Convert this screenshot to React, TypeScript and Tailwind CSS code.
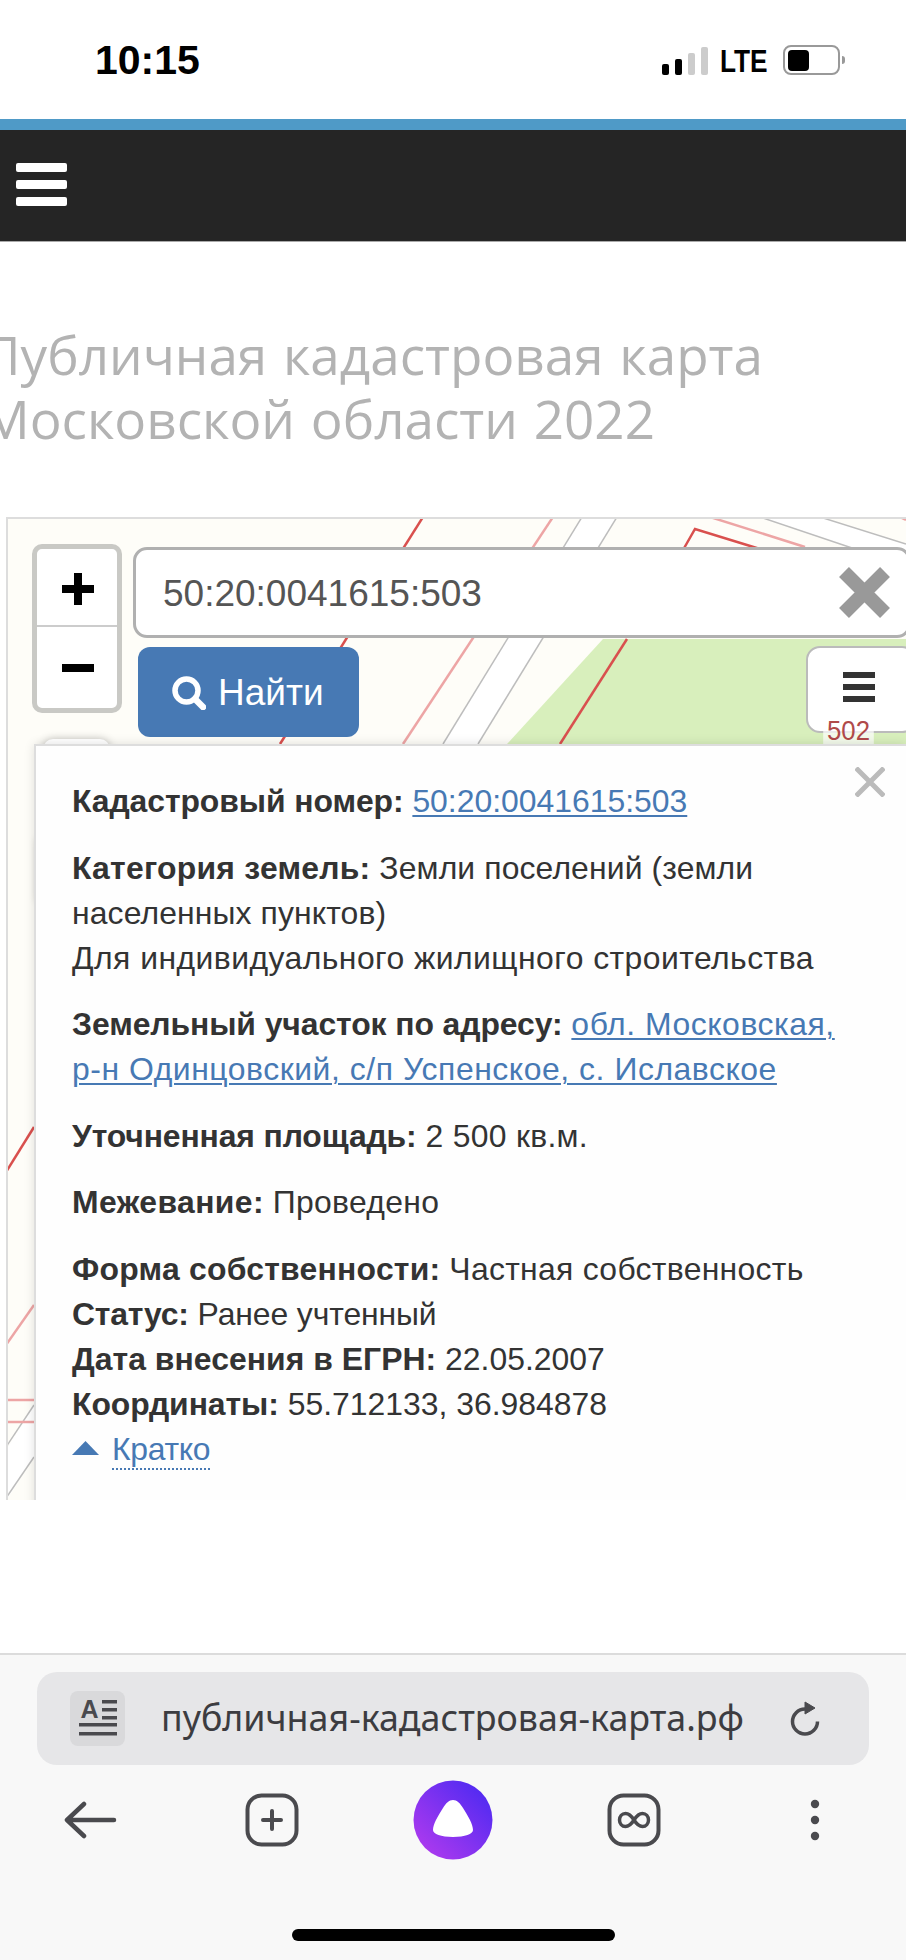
const sans = "font-['Liberation_Sans',Arial,sans-serif]";

function Bold({ children, className = "tracking-[-0.08px]" }: { children: React.ReactNode; className?: string }) {
  return <b className={`font-bold ${className}`}>{children}</b>;
}

function Plain({ children, className = "tracking-[0.3px]" }: { children: React.ReactNode; className?: string }) {
  return <span className={className}>{children}</span>;
}

function Lnk({ children, ru }: { children: React.ReactNode; ru?: boolean }) {
  return (
    <a className={`text-[#4779b4] underline decoration-2 underline-offset-[3px] ${ru ? "tracking-[0.55px]" : ""}`}>
      {children}
    </a>
  );
}

function StatusBar() {
  return (
    <div className={`relative flex h-[119px] shrink-0 items-start bg-white ${sans}`}>
      <div className="ml-[95px] mt-[37px] text-[41px] font-bold leading-[46px] text-black">10:15</div>
      <div className="ml-auto mr-[61px] mt-[45px] flex items-start">
        <div className="mt-px flex h-[29px] items-end gap-[6px]">
          <i className="h-[11px] w-[7px] rounded-[2px] bg-black" />
          <i className="h-[16px] w-[7px] rounded-[2px] bg-black" />
          <i className="h-[22px] w-[7px] rounded-[2px] bg-[#cccccc]" />
          <i className="h-[28px] w-[7px] rounded-[2px] bg-[#cccccc]" />
        </div>
        <div className="ml-[12px] mt-[-2px] w-[48px] origin-left scale-x-[0.82] text-[32px] font-bold leading-[36px] text-black">LTE</div>
        <div className="ml-[15px] flex h-[30px] w-[57px] items-center rounded-[8px] border-2 border-[#999999] pl-[3px]">
          <div className="h-[21px] w-[21px] rounded-[4px] bg-black" />
        </div>
        <div className="ml-[2px] mt-[11px] h-[8px] w-[3px] rounded-r-full bg-[#999999]" />
      </div>
    </div>
  );
}

function NavBar() {
  return (
    <>
      <div className="h-[11px] shrink-0 bg-[#4f9ac7]" />
      <div className="flex h-[112px] shrink-0 flex-col justify-center gap-[8px] border-b border-[#aaaaaa] bg-[#252525] pb-[3px] pl-[16px]">
        <i className="h-[9px] w-[51px] rounded-[2px] bg-white" />
        <i className="h-[9px] w-[51px] rounded-[2px] bg-white" />
        <i className="h-[9px] w-[51px] rounded-[2px] bg-white" />
      </div>
    </>
  );
}

function MapLines() {
  return (
    <svg className="absolute left-0 top-0 h-[981px] w-[898px]" viewBox="8 519 898 981" fill="none">
      <polygon points="603,639 906,639 906,744 507,744" fill="#d8efbc" />
      <polygon points="582,517 617,517 478,744 443,744" fill="#ffffff" />
      <polygon points="760,517 820,517 906,544 906,550 858,550" fill="#ffffff" />
      <polygon points="8,1447 34,1405 34,1457 8,1498" fill="#ffffff" />
      <g stroke="#bdbdbd" strokeWidth="1.5">
        <path d="M582 517 L443 744" />
        <path d="M617 517 L478 744" />
        <path d="M760 517 L858 550" />
        <path d="M820 517 L906 544" />
        <path d="M6 1447 L34 1405" />
        <path d="M6 1498 L34 1457" />
      </g>
      <g stroke="#d9504e" strokeWidth="2.5">
        <path d="M423 517 L280 744" />
        <path d="M627 639 L560 744" />
        <path d="M683 550 L695 529 L760 549" />
        <path d="M6 1172 L34 1127" />
      </g>
      <g stroke="#eda5a5" strokeWidth="2.5">
        <path d="M553 517 L403 744" />
        <path d="M710 517 L805 547" />
        <path d="M6 1345 L34 1305" />
        <path d="M6 1400 L34 1400" />
        <path d="M6 1422 L34 1422" />
        <path d="M900 517 L906 520" />
      </g>
    </svg>
  );
}

function ZoomBox() {
  return (
    <div className="absolute left-[24px] top-[25px] flex h-[169px] w-[90px] flex-col overflow-hidden rounded-[10px] border-[5px] border-[#c9c9c5] bg-white">
      <div className="flex h-[78px] items-center justify-center border-b-2 border-[#cccccc] pl-[2px] pt-[4px]">
        <svg width="32" height="32" viewBox="0 0 32 32" fill="#000000">
          <rect x="0" y="12" width="32" height="8" />
          <rect x="12" y="0" width="8" height="32" />
        </svg>
      </div>
      <div className="flex flex-1 items-center justify-center pl-[2px]">
        <div className="h-[8px] w-[32px] bg-black" />
      </div>
    </div>
  );
}

function SearchControls() {
  return (
    <>
      <div className={`absolute left-[125px] top-[28px] flex h-[91px] w-[778px] items-center rounded-[14px] border-[3px] border-[#b0b0b0] bg-white pl-[27px] pt-[2px] text-[37px] text-[#555555] ${sans}`}>
        50:20:0041615:503
      </div>
      <svg className="absolute left-[831px] top-[48px]" width="51" height="51" viewBox="0 0 51 51" stroke="#999999" strokeWidth="14">
        <path d="M5 5 L46 46 M46 5 L5 46" />
      </svg>
      <div className={`absolute left-[130px] top-[128px] flex h-[90px] w-[221px] items-center gap-[12px] rounded-[12px] bg-[#4779b4] pl-[34px] pt-[2px] text-[37px] text-white ${sans}`}>
        <svg width="34" height="34" viewBox="0 0 34 34" fill="none" stroke="#ffffff">
          <circle cx="14.5" cy="14.5" r="11.5" strokeWidth="5.5" />
          <path d="M23 23 L31 31" strokeWidth="6.5" strokeLinecap="round" />
        </svg>
        Найти
      </div>
      <div className="absolute left-[798px] top-[127px] flex h-[87px] w-[110px] flex-col gap-[6px] rounded-[14px] border-2 border-[#bbbbbb] bg-white pl-[35px] pt-[24px]">
        <i className="h-[6px] w-[32px] bg-[#333333]" />
        <i className="h-[6px] w-[32px] bg-[#333333]" />
        <i className="h-[6px] w-[32px] bg-[#333333]" />
      </div>
      <div className={`absolute left-[813px] top-[198px] w-[55px] scale-x-[0.92] bg-white/70 text-center text-[28px] leading-[27px] text-[#b04a4a] ${sans}`}>
        502
      </div>
    </>
  );
}

function InfoCard() {
  return (
    <div className={`absolute bottom-[-12px] left-[26px] right-0 top-[225px] border-l-2 border-t-2 border-[#dddddd] bg-[#fefefe] pl-[36px] pr-[40px] pt-[33px] text-[31.9px] leading-[45px] text-[#333333] shadow-[0_0_10px_rgba(0,0,0,0.12)] ${sans}`}>
      <svg className="absolute left-[819px] top-[21px]" width="30" height="30" viewBox="0 0 30 30" stroke="#bbbbbb" strokeWidth="5">
        <path d="M1 1 L29 29 M29 1 L1 29" />
      </svg>
      <p className="mb-[21.5px]">
        <Bold>Кадастровый номер:</Bold> <Lnk>50:20:0041615:503</Lnk>
      </p>
      <p className="mb-[21.5px]">
        <Bold className="tracking-[0.24px]">Категория земель:</Bold>{" "}
        <Plain className="tracking-[0.12px]">Земли поселений (земли населенных пунктов)</Plain>
        <br />
        <Plain className="tracking-[0.45px]">Для индивидуального жилищного строительства</Plain>
      </p>
      <p className="mb-[21.5px]">
        <Bold>Земельный участок по адресу:</Bold>{" "}
        <Lnk ru>обл. Московская, р-н Одинцовский, с/п Успенское, с. Иславское</Lnk>
      </p>
      <p className="mb-[21.5px]">
        <Bold className="tracking-[-0.13px]">Уточненная площадь:</Bold> <Plain>2 500 кв.м.</Plain>
      </p>
      <p className="mb-[21.5px]">
        <Bold className="tracking-[0.4px]">Межевание:</Bold> <Plain>Проведено</Plain>
      </p>
      <p>
        <Bold className="tracking-[0.25px]">Форма собственности:</Bold> <Plain>Частная собственность</Plain>
        <br />
        <Bold className="tracking-[-0.2px]">Статус:</Bold> <Plain className="tracking-[-0.1px]">Ранее учтенный</Plain>
        <br />
        <Bold className="tracking-[0.04px]">Дата внесения в ЕГРН:</Bold> 22.05.2007
        <br />
        <Bold className="tracking-[-0.05px]">Координаты:</Bold> 55.712133, 36.984878
      </p>
      <div className="mt-[3px] flex items-center gap-[13px]">
        <svg className="-mt-[4px]" width="27" height="14" viewBox="0 0 27 14" fill="#4779b4">
          <polygon points="13.5,0 27,14 0,14" />
        </svg>
        <span className="border-b-2 border-dotted border-[#4779b4] leading-[38px] tracking-[-0.3px] text-[#4779b4]">Кратко</span>
      </div>
    </div>
  );
}

function MapPanel() {
  return (
    <div className="ml-[6px] h-[983px] shrink-0 overflow-hidden border-l-2 border-t-2 border-[#dddddd] bg-[#fefdf8]">
      <div className="relative h-full w-full">
        <MapLines />
        <ZoomBox />
        <SearchControls />
        <div className="absolute left-[35px] top-[220px] h-[30px] w-[67px] rounded-t-[10px] bg-white shadow-[0_0_8px_rgba(0,0,0,0.25)]" />
        <div className="absolute left-[30px] top-[320px] h-[62px] w-[40px] bg-white shadow-[0_0_8px_rgba(0,0,0,0.3)]" />
        <InfoCard />
      </div>
    </div>
  );
}

function ReaderIcon() {
  return (
    <svg className="shrink-0 rounded-[8px] bg-[#d9d9db]" width="55" height="55" viewBox="0 0 55 55" fill="#4a4a4e">
      <text x="10.5" y="27" fontFamily="Liberation Sans, sans-serif" fontWeight="700" fontSize="25">A</text>
      <rect x="32" y="9" width="15" height="3.5" />
      <rect x="32" y="17" width="15" height="3.5" />
      <rect x="32" y="25" width="15" height="3.5" />
      <rect x="9" y="32" width="38" height="3.5" />
      <rect x="9" y="41" width="38" height="3.5" />
    </svg>
  );
}

function BrowserBar() {
  const stroke = "#4a4a4e";
  return (
    <div className="mt-auto flex h-[307px] shrink-0 flex-col border-t-2 border-[#dcdcdc] bg-[#f8f8f8]">
      <div className="ml-[37px] mt-[17px] flex h-[93px] w-[832px] items-center rounded-[20px] bg-[#e6e6e8] pl-[33px]">
        <ReaderIcon />
        <span className="-mt-[2px] ml-[36px] whitespace-nowrap font-['Noto_Sans',sans-serif] text-[35.8px] text-[#3c3c40]">публичная-кадастровая-карта.рф</span>
        <svg className="-mt-[2px] ml-auto mr-[48px] shrink-0" width="32" height="36" viewBox="0 0 32 36" fill="none" stroke={stroke} strokeWidth="3.5">
          <path d="M16 9 A12.5 12.5 0 1 0 28.5 21.5" />
          <polygon points="16,2 26,8 16,14" fill={stroke} strokeWidth="1" />
        </svg>
      </div>
      <div className="mt-[15px] grid h-[80px] grid-cols-5 place-items-center">
        <svg width="54" height="38" viewBox="0 0 54 38" fill="none" stroke={stroke} strokeWidth="4.5" strokeLinecap="round" strokeLinejoin="round">
          <path d="M3 19 H50 M20 3 L3 19 L20 35" />
        </svg>
        <svg width="54" height="54" viewBox="0 0 54 54" fill="none" stroke={stroke} strokeWidth="4" strokeLinecap="round">
          <rect x="2.5" y="2.5" width="49" height="49" rx="14" />
          <path d="M18 27 H36 M27 18 V36" />
        </svg>
        <svg width="80" height="80" viewBox="0 0 80 80">
          <defs>
            <linearGradient id="alice" x1="1" y1="0" x2="0" y2="1">
              <stop offset="0" stopColor="#4428f2" />
              <stop offset="1" stopColor="#b93cee" />
            </linearGradient>
          </defs>
          <circle cx="40" cy="40" r="39.5" fill="url(#alice)" />
          <path d="M40 20 C44 20 47 23 50 28 C55 36 60 44 60 50 C60 54 52 57 40 57 C28 57 20 54 20 50 C20 44 25 36 30 28 C33 23 36 20 40 20 Z" fill="#ffffff" />
        </svg>
        <svg width="54" height="54" viewBox="0 0 54 54" fill="none" stroke={stroke} strokeWidth="4">
          <rect x="2.5" y="2.5" width="49" height="49" rx="14" />
          <path
            d="M27 27 C24.5 23 22 20.5 18.5 20.5 C15 20.5 12.5 23.5 12.5 27 C12.5 30.5 15 33.5 18.5 33.5 C22 33.5 24.5 31 27 27 C29.5 23 32 20.5 35.5 20.5 C39 20.5 41.5 23.5 41.5 27 C41.5 30.5 39 33.5 35.5 33.5 C32 33.5 29.5 31 27 27 Z"
            strokeWidth="3.5"
          />
        </svg>
        <svg width="10" height="42" viewBox="0 0 10 42" fill={stroke}>
          <circle cx="5" cy="5" r="4.2" />
          <circle cx="5" cy="21" r="4.2" />
          <circle cx="5" cy="37" r="4.2" />
        </svg>
      </div>
      <div className="ml-[292px] mt-[69px] h-[12px] w-[323px] rounded-full bg-black" />
    </div>
  );
}

export default function App() {
  return (
    <div className="relative flex h-[1960px] w-[906px] flex-col overflow-hidden bg-white">
      <StatusBar />
      <NavBar />
      <div className="h-[275px] shrink-0 whitespace-nowrap pt-[81px] font-['Open_Sans',sans-serif] text-[53px] leading-[64px] text-[#b3b3b3] [word-spacing:2px]">
        <div className="-ml-[18px]">Публичная кадастровая карта</div>
        <div className="-ml-[18px]">Московской области 2022</div>
      </div>
      <MapPanel />
      <BrowserBar />
    </div>
  );
}
